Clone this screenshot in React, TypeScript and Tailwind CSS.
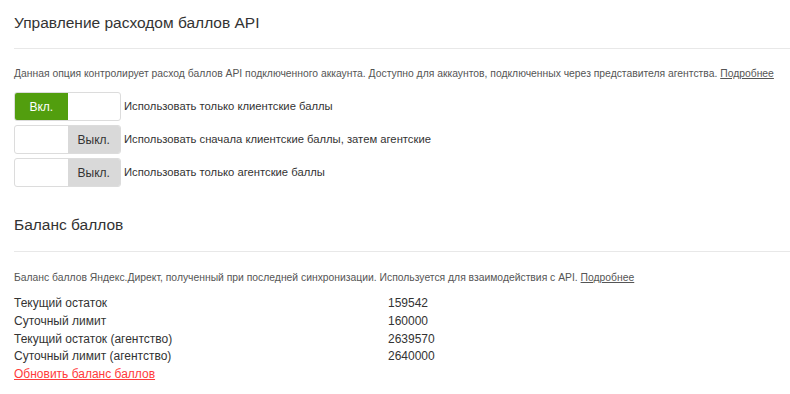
const font = { fontFamily: '"Liberation Sans", Arial, sans-serif' };

const options = [
  { label: 'Использовать только клиентские баллы', on: true },
  { label: 'Использовать сначала клиентские баллы, затем агентские', on: false },
  { label: 'Использовать только агентские баллы', on: false },
];

const balance = [
  { name: 'Текущий остаток', value: '159542' },
  { name: 'Суточный лимит', value: '160000' },
  { name: 'Текущий остаток (агентство)', value: '2639570' },
  { name: 'Суточный лимит (агентство)', value: '2640000' },
];

function Toggle({ on }: { on: boolean }) {
  return (
    <div className="flex h-[29px] w-[107px] shrink-0 overflow-hidden rounded-[3px] border border-[#dcdcdc] bg-white text-[12px]">
      {on ? (
        <>
          <div className="flex w-1/2 items-center justify-center bg-[#529e0e] text-white">Вкл.</div>
          <div className="w-1/2" />
        </>
      ) : (
        <>
          <div className="w-1/2" />
          <div className="flex w-1/2 items-center justify-center bg-[#d9d9d9] text-[#333]">Выкл.</div>
        </>
      )}
    </div>
  );
}

export default function App() {
  return (
    <div style={font} className="min-h-[394px] w-[790px] bg-white pl-[14px] pt-[13px] text-[#333]">
      <h2 className="border-b border-[#e8e8e8] pb-[15px] text-[15.5px] leading-[20px] font-normal">
        Управление расходом баллов API
      </h2>
      <p className="mt-[18px] text-[10.35px] leading-[14px] text-[#555]">
        Данная опция контролирует расход баллов API подключенного аккаунта. Доступно для аккаунтов, подключенных через представителя агентства.{' '}
        <a className="underline">Подробнее</a>
      </p>
      <div className="mt-[11px] flex flex-col gap-[4px]">
        {options.map((o) => (
          <div key={o.label} className="flex items-center">
            <Toggle on={o.on} />
            <span className="ml-[3px] text-[11.25px]">{o.label}</span>
          </div>
        ))}
      </div>

      <h2 className="mt-[28px] border-b border-[#e8e8e8] pb-[16px] text-[15.5px] leading-[20px] font-normal">
        Баланс баллов
      </h2>
      <p className="mt-[19px] text-[10.35px] leading-[14px] text-[#555]">
        Баланс баллов Яндекс.Директ, полученный при последней синхронизации. Используется для взаимодействия с API.{' '}
        <a className="underline">Подробнее</a>
      </p>
      <div className="mt-[10px] text-[12px] leading-[17.75px]">
        {balance.map((b) => (
          <div key={b.name} className="grid grid-cols-[374px_1fr]">
            <span>{b.name}</span>
            <span>{b.value}</span>
          </div>
        ))}
        <a className="text-[#ff3b3b] underline">Обновить баланс баллов</a>
      </div>
    </div>
  );
}
